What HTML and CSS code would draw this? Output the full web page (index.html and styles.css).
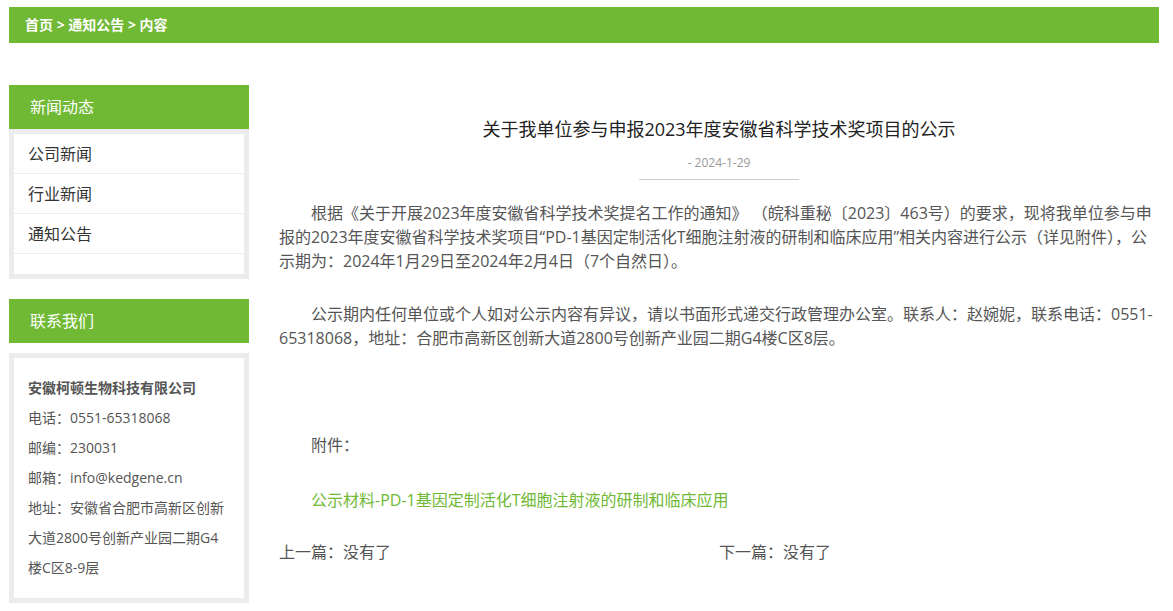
FILE: index.html
```html
<!DOCTYPE html>
<html lang="zh-CN">
<head>
    <meta charset="UTF-8">
    <meta name="viewport" content="width=device-width, initial-scale=1.0">
    <title>关于我单位参与申报2023年度安徽省科学技术奖项目的公示</title>
    <link rel="stylesheet" href="styles.css">
</head>
<body>
    <div class="page">
        <div class="crumbs">
            <a href="#">首页</a> &gt; <a href="#">通知公告</a> &gt; 内容
        </div>

        <div class="wrap">
            <div class="side">
                <div class="side-title">新闻动态</div>
                <ul class="side-menu">
                    <li><a href="#">公司新闻</a></li>
                    <li><a href="#">行业新闻</a></li>
                    <li><a href="#">通知公告</a></li>
                    <li class="empty"></li>
                </ul>

                <div class="side-title contact-title">联系我们</div>
                <div class="contact">
                    <p class="company">安徽柯顿生物科技有限公司</p>
                    <p>电话：0551-65318068</p>
                    <p>邮编：230031</p>
                    <p>邮箱：info@kedgene.cn</p>
                    <p>地址：安徽省合肥市高新区创新大道2800号创新产业园二期G4楼C区8-9层</p>
                </div>
            </div>

            <div class="main">
                <h1 class="title">关于我单位参与申报2023年度安徽省科学技术奖项目的公示</h1>
                <div class="date">- 2024-1-29</div>

                <div class="article">
                    <p>根据《关于开展2023年度安徽省科学技术奖提名工作的通知》 （皖科重秘〔2023〕463号）的要求，现将我单位参与申报的2023年度安徽省科学技术奖项目“PD-1基因定制活化T细胞注射液的研制和临床应用”相关内容进行公示（详见附件），公示期为：2024年1月29日至2024年2月4日（7个自然日）。</p>
                    <p>公示期内任何单位或个人如对公示内容有异议，请以书面形式递交行政管理办公室。联系人：赵婉妮，联系电话：0551-65318068，地址：合肥市高新区创新大道2800号创新产业园二期G4楼C区8层。</p>
                    <p class="attach">附件：</p>
                    <p class="file"><a href="#">公示材料-PD-1基因定制活化T细胞注射液的研制和临床应用</a></p>
                </div>

                <div class="pager">
                    <div>上一篇：没有了</div>
                    <div>下一篇：没有了</div>
                </div>
            </div>
        </div>
    </div>
</body>
</html>
```

FILE: styles.css
```css
body {
    margin: 0;
    font-family: "Open Sans", "Noto Sans CJK SC", sans-serif;
    color: #555;
    background: #fff;
}
a {
    color: inherit;
    text-decoration: none;
}
.page {
    width: 1150px;
    margin: 7px 0 0 9px;
}

/* breadcrumb bar */
.crumbs {
    height: 36px;
    line-height: 35px;
    padding-left: 16px;
    background: #70b935;
    color: #fff;
    font-size: 14px;
    font-weight: bold;
}

.wrap {
    display: flex;
    gap: 30px;
    margin-top: 42px;
}

/* left column */
.side {
    width: 240px;
    flex-shrink: 0;
}
.side-title {
    height: 44px;
    line-height: 44px;
    padding-left: 21px;
    background: #70b935;
    color: #fff;
    font-size: 16px;
}
.side-menu {
    list-style: none;
    margin: 0;
    padding: 0;
    border: 5px solid #ececec;
}
.side-menu li {
    height: 39px;
    line-height: 41px;
    padding-left: 14px;
    border-bottom: 1px solid #ececec;
    font-size: 16px;
    color: #333;
}
.side-menu li.empty {
    height: 20px;
    border-bottom: none;
}
.contact-title {
    margin-top: 20px;
}
.contact {
    margin-top: 10px;
    border: 5px solid #ececec;
    padding: 15px 14px;
    font-size: 14px;
    line-height: 30px;
}
.contact p {
    margin: 0;
}
.contact .company {
    font-weight: bold;
}

/* right column */
.main {
    flex: 1;
}
.title {
    margin: 24px 0 0;
    text-align: center;
    font-size: 18px;
    font-weight: normal;
    line-height: 40px;
    color: #222;
}
.date {
    width: 160px;
    margin: 5px auto 0;
    padding-bottom: 8px;
    border-bottom: 1px solid #ccc;
    text-align: center;
    font-size: 12px;
    color: #999;
}
.article {
    margin-top: 21px;
    font-size: 16px;
    line-height: 24px;
}
.article p {
    margin: 0 0 29px;
    text-indent: 2em;
}
.article .attach {
    margin-top: 83px;
    margin-bottom: 31px;
}
.article .file a {
    color: #70b935;
}
.pager {
    display: flex;
    margin-top: -1px;
    font-size: 16px;
    line-height: 24px;
}
.pager div {
    width: 50%;
}
```
